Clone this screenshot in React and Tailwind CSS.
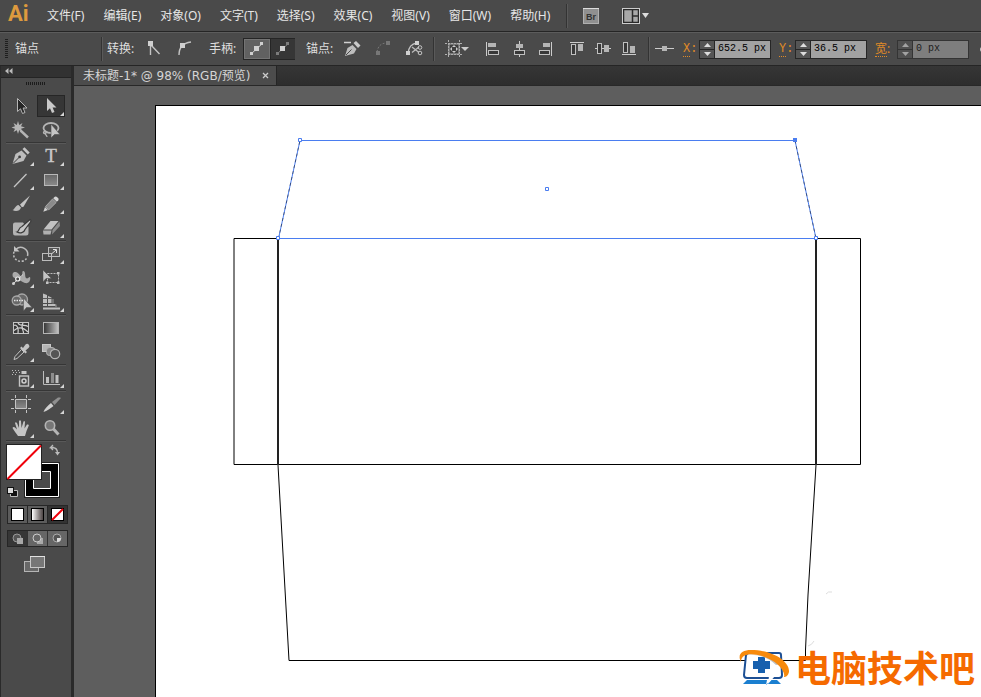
import { useState } from 'react'

const menus = ['文件(F)', '编辑(E)', '对象(O)', '文字(T)', '选择(S)', '效果(C)', '视图(V)', '窗口(W)', '帮助(H)']

const Cursor = ({ x = 0, y = 0, fill = '#c9c9c9', stroke = 'none' }) => (
  <path transform={`translate(${x} ${y})`} d="M0 0V13L3 10.3L5 15L7.5 14L5.6 9.5H9.5Z" fill={fill} stroke={stroke} />
)

// every tool icon is drawn in a 30x24 cell
const toolGroups = [
  [
    { name: '选择工具', icon: <Cursor x={11.5} y={4.5} fill="#262626" stroke="#b5b5b5" /> },
    { name: '直接选择工具', more: true, icon: <Cursor x={11} y={4} /> },
    {
      name: '魔棒工具',
      icon: (
        <>
          <path d="M12 3L13.2 7L16.5 5L15 8.3L19 9.5L15 10.8L16.5 14L13.2 12.2L12 16L10.8 12.2L7.5 14L9 10.8L5.5 9.5L9 8.3L7.5 5L10.8 7Z" fill="#b5b5b5" />
          <path d="M14.5 12.5L22 19.5" stroke="#b5b5b5" strokeWidth="2.4" />
        </>
      ),
    },
    {
      name: '套索工具',
      icon: (
        <>
          <ellipse cx="15" cy="10" rx="7.5" ry="5" fill="none" stroke="#b5b5b5" strokeWidth="1.8" />
          <path d="M9 13C6 14 8 17 10 15C12 14 9 12 9 15C9 17 11 17 11 19" fill="none" stroke="#b5b5b5" strokeWidth="1.2" />
          <path d="M15 6V20L18.5 16.5H24Z" fill="#c4c4c4" stroke="#4a4a4a" strokeWidth="0.6" />
        </>
      ),
    },
  ],
  [
    {
      name: '钢笔工具', more: true,
      icon: (
        <>
          <path d="M6.5 20L9.5 10L15.5 6.5L20.5 11.5L17.5 17Z" fill="#bcbcbc" />
          <path d="M16.5 5L18.5 3.3L23.7 8.5L21.8 10.5Z" fill="#c4c4c4" />
          <path d="M7 19.5L13 13.5" stroke="#3c3c3c" />
          <circle cx="13.6" cy="12.9" r="1.4" fill="#3c3c3c" />
        </>
      ),
    },
    {
      name: '文字工具', more: true,
      icon: <text x="15" y="18" textAnchor="middle" fontSize="19" fontFamily="Liberation Serif, serif" fill="#c9c9c9" stroke="#c9c9c9" strokeWidth="0.4">T</text>,
    },
    { name: '直线段工具', more: true, icon: <path d="M8 19L20.5 6" stroke="#c4c4c4" strokeWidth="1.3" /> },
    { name: '矩形工具', more: true, icon: <rect x="8.5" y="6.5" width="13" height="11" fill="url(#grey)" stroke="#b8b8b8" /> },
    {
      name: '画笔工具',
      icon: (
        <>
          <path d="M14 12.5L24 3.5L17.5 14.8L15.8 15.2Z" fill="#c4c4c4" />
          <path d="M6.5 18C9 17.5 9 13.5 12.5 13L15 15.5C14 19.5 9 19.5 6.5 18Z" fill="#bcbcbc" />
        </>
      ),
    },
    {
      name: '铅笔工具', more: true,
      icon: (
        <>
          <path d="M7.3 19.7L9 15L12 18Z" fill="#d0d0d0" />
          <path d="M9.5 14.5L16.5 7L20.2 10.5L12.8 17.8Z" fill="#8a8a8a" stroke="#b5b5b5" strokeWidth="0.8" />
          <path d="M17.2 6.2L18.8 4.8Q20 4 21.2 5.2L22.3 6.3Q23 7.4 22.2 8.4L20.8 9.8Z" fill="#d5d5d5" />
        </>
      ),
    },
    {
      name: '斑点画笔工具',
      icon: (
        <>
          <path d="M7 8.5Q7 6.5 9 6.5H17L20 10.5H22.500V17Q22.500 19.500 20 19.500H9Q7 19.500 7 17Z" fill="#b4b4b4" />
          <path d="M11 16C13 15.500 12.500 11.500 16 10.500L24 3.500Q25.500 4 24.500 6L19 13.500C18 17 14 17.500 11 16Z" fill="#c6c6c6" stroke="#3a3a3a" strokeWidth="1.200" />
        </>
      ),
    },
    {
      name: '橡皮擦工具', more: true,
      icon: (
        <>
          <path d="M14.500 5H22.500L15.500 13.500H7.500Z" fill="#c2c2c2" />
          <path d="M7 14.500H15.500L14.500 18.500H7.500Z" fill="#b0b0b0" />
          <path d="M16.500 14L23.500 5.500L24 10L16 18.500Z" fill="#8c8c8c" />
        </>
      ),
    },
  ],
  [
    {
      name: '旋转工具', more: true,
      icon: (
        <>
          <path d="M10 7.2A7 7 0 0 1 21.5 14" fill="none" stroke="#bcbcbc" strokeWidth="1.5" />
          <path d="M20.5 16.5A7 7 0 0 1 9 8" fill="none" stroke="#bcbcbc" strokeWidth="1.5" strokeDasharray="2 1.6" />
          <path d="M8 4V9.5H13.5Z" fill="#c4c4c4" />
        </>
      ),
    },
    {
      name: '比例缩放工具', more: true,
      icon: (
        <>
          <rect x="12.500" y="5.500" width="11" height="9" fill="#575757" stroke="#bcbcbc" />
          <rect x="6.500" y="11.500" width="9" height="7" fill="none" stroke="#bcbcbc" />
          <path d="M15.500 12L20 8M17 7.500H20.500V11" fill="none" stroke="#e0e0e0" />
        </>
      ),
    },
    {
      name: '宽度工具', more: true,
      icon: (
        <>
          <path d="M7 11C5.500 7 8 5 11 6.500C14 8 14.500 12 16 10C17 8 15.500 4.500 17.500 5C20 6 18.500 10 20 12C21.500 13.500 22.500 11 24 11C25 14 23 18 19 17C16 16 15 14 12.500 14.500Z" fill="#aaaaaa" />
          <path d="M7 18L17 8.500" stroke="#e0e0e0" />
          <circle cx="11.700" cy="13" r="2" fill="#4a4a4a" stroke="#efefef" strokeWidth="1.200" />
          <circle cx="7.500" cy="17.500" r="1.500" fill="#d0d0d0" />
        </>
      ),
    },
    {
      name: '自由变换工具',
      icon: (
        <>
          <rect x="11.500" y="7.500" width="11" height="9" fill="none" stroke="#bdbdbd" strokeDasharray="2 1" />
          <path d="M21 6h2.500v2.500H21zM10 15.500h2.500v2.500H10zM21 15.500h2.500v2.500H21z" fill="#c4c4c4" />
          <path d="M7 4V16L10 12.500H15.500Z" fill="#c4c4c4" stroke="#4a4a4a" strokeWidth="0.500" />
        </>
      ),
    },
    {
      name: '形状生成器工具', more: true,
      icon: (
        <>
          <circle cx="16" cy="9.500" r="5.500" fill="#686868" stroke="#a8a8a8" strokeWidth="1.300" />
          <circle cx="10.700" cy="10.500" r="4.500" fill="#686868" stroke="#a8a8a8" strokeWidth="1.300" />
          <path d="M8 10.500H18" stroke="#e5e5e5" strokeWidth="1.300" strokeDasharray="1.500 1" />
          <path d="M17.500 8V21L20.500 17.500H26Z" fill="#c6c6c6" stroke="#4a4a4a" strokeWidth="0.500" />
        </>
      ),
    },
    {
      name: '透视网格工具', more: true,
      icon: (
        <>
          <path d="M7 3.500L11 5V13H7ZM12 6L15.500 7.500V13H12ZM7 14H11V16H7ZM12 14H19.500V16H12ZM7 17.500H24V19.500H7Z" fill="#bdbdbd" />
          <path d="M7 8.500H16" stroke="#5a5a5a" />
          <path d="M17 9V13.500M20 14.500V17" stroke="#9a9a9a" />
        </>
      ),
    },
  ],
  [
    {
      name: '网格工具',
      icon: (
        <>
          <rect x="7.500" y="6.500" width="15" height="11" fill="#383838" stroke="#c4c4c4" />
          <path d="M8 9.500C11 8 13 13 12 17.500M12 7C14 11 19 8 22 10.500M8 14.500C13 10 18 12 22 16M17 7C14 12 18 14 17.500 17.500" stroke="#d0d0d0" strokeWidth="1.200" fill="none" />
        </>
      ),
    },
    { name: '渐变工具', icon: <rect x="7.500" y="6.500" width="15" height="11" fill="url(#ramp)" stroke="#b5b5b5" /> },
    {
      name: '吸管工具', more: true,
      icon: (
        <>
          <path d="M8 19.500L9 16.500L15.500 9.500L18 12L11 18.500Z" fill="#474747" stroke="#c4c4c4" />
          <path d="M14 8L15.500 6.500L17 8L19.500 4.500Q21.500 3 23 5Q24.200 6.500 22.500 8L19.500 10.500L21 12L19.500 13.500Z" fill="#c4c4c4" />
        </>
      ),
    },
    {
      name: '混合工具',
      icon: (
        <>
          <rect x="6.500" y="4.500" width="8" height="7" fill="#b5b5b5" stroke="#c9c9c9" />
          <rect x="10.500" y="7.500" width="8.500" height="8" rx="3" fill="#858585" stroke="#b5b5b5" />
          <circle cx="19" cy="14" r="4.700" fill="#555" stroke="#b5b5b5" strokeWidth="1.200" />
        </>
      ),
    },
  ],
  [
    {
      name: '符号喷枪工具', more: true,
      icon: (
        <>
          <path d="M6 4.500H14M7 6.500H15M6 8.500H12" stroke="#bcbcbc" strokeDasharray="1 2" />
          <rect x="15.500" y="5" width="5" height="3" fill="#c4c4c4" />
          <rect x="13.500" y="10" width="9" height="10" fill="#4a4a4a" stroke="#c4c4c4" strokeWidth="1.400" />
          <circle cx="18" cy="15" r="2" fill="none" stroke="#cfcfcf" strokeWidth="1.500" />
        </>
      ),
    },
    {
      name: '柱形图工具', more: true,
      icon: (
        <>
          <path d="M7.500 5V18.500H24" stroke="#bdbdbd" fill="none" />
          <path d="M10 11h3v6h-3zM19.500 9h3v8h-3z" fill="#c0c0c0" />
          <path d="M15 7h3v10h-3z" fill="#8e8e8e" />
        </>
      ),
    },
  ],
  [
    {
      name: '画板工具',
      icon: (
        <>
          <rect x="9.500" y="7.500" width="11" height="9" fill="url(#grey)" />
          <path d="M5 7.500H8M22 7.500H25M5 16.500H8M22 16.500H25M9.500 3V6M20.500 3V6M9.500 18V21M20.500 18V21M9.500 7.500H20.500V16.500H9.500Z" stroke="#c4c4c4" fill="none" />
        </>
      ),
    },
    {
      name: '切片工具', more: true,
      icon: (
        <>
          <path d="M7.500 20C8.500 16.500 12 13.500 15 11L17.500 14C14.500 16 11 19 7.500 20Z" fill="#d0d0d0" />
          <path d="M16 10L22 5.500H24.500V6.500L18.500 13Z" fill="#8f8f8f" />
        </>
      ),
    },
    {
      name: '抓手工具', more: true,
      icon: <path d="M12 20C10 17.500 8.500 15 6.500 12C7 10.500 8.500 11 9.500 12L11 13.500L9 7Q9.500 5.500 11 7L13 12V5Q14 3.500 15 5L15.500 12L17.500 5.500Q18.500 4.500 19 6L18.500 12.500L21 8.500Q23 8 22.800 9.500L20.500 15L19 20Z" fill="#c4c4c4" />,
    },
    {
      name: '缩放工具',
      icon: (
        <>
          <circle cx="14" cy="9.500" r="4.700" fill="#777" stroke="#b5b5b5" strokeWidth="1.600" />
          <path d="M17.500 13L22.500 18.500" stroke="#b5b5b5" strokeWidth="3" />
        </>
      ),
    },
  ],
]

const alignIcons = [
  ['水平左对齐', <><path d="M6.500 4V18" stroke="#ccc" /><path d="M8 5h8v4H8z" fill="#b5b5b5" /><rect x="8.500" y="12.500" width="10" height="4" fill="#383838" stroke="#c0c0c0" /></>],
  ['水平居中对齐', <><path d="M13.500 3V19" stroke="#ccc" /><path d="M10 6h7v4h-7z" fill="#b5b5b5" /><rect x="8.500" y="12.500" width="10" height="4" fill="#383838" stroke="#c0c0c0" /></>],
  ['水平右对齐', <><path d="M19.500 4V18" stroke="#ccc" /><path d="M11 5h7v4h-7z" fill="#b5b5b5" /><rect x="7.500" y="12.500" width="10" height="4" fill="#383838" stroke="#c0c0c0" /></>],
  ['垂直顶对齐', <><path d="M6 4.500H20" stroke="#ccc" /><rect x="7.500" y="6.500" width="4" height="10" fill="#383838" stroke="#c0c0c0" /><path d="M14 6h5v7h-5z" fill="#b5b5b5" /></>],
  ['垂直居中对齐', <><path d="M5 10.500H21" stroke="#ccc" /><rect x="7.500" y="5.500" width="4" height="10" fill="#383838" stroke="#c0c0c0" /><path d="M14 7h5v7h-5z" fill="#b5b5b5" /></>],
  ['垂直底对齐', <><path d="M6 16.500H20" stroke="#ccc" /><rect x="7.500" y="4.500" width="4" height="10" fill="#383838" stroke="#c0c0c0" /><path d="M14 8h5v7h-5z" fill="#b5b5b5" /></>],
]

function Divider({ className = '' }) {
  return <span className={`h-6 w-[2px] shrink-0 border-l border-[#333] border-r border-r-[#5a5a5a] ${className}`} />
}

function IconButton({ label, width, className = '', children }) {
  return (
    <button type="button" aria-label={label} className={`shrink-0 ${className}`}>
      <svg width={width} height="22" viewBox={`0 0 ${width} 22`} fill="none">{children}</svg>
    </button>
  )
}

function HandleIcon({ dim }) {
  const c = dim ? '#7c7c7c' : '#cfcfcf'
  return (
    <svg width="24" height="18" viewBox="0 0 24 18">
      <path d="M6 14L18 3" stroke={c} />
      <path d="M5 12h3v3H5zM15 2h3v3h-3z" fill={c} />
      <path d="M9 6h5v5H9z" fill="#d0d0d0" />
    </svg>
  )
}

function NumberField({ id, label, value, disabled, labelClass }) {
  const [text, setText] = useState(value)
  return (
    <div className="ml-2 flex shrink-0 items-center">
      <div className={labelClass}>
        <label htmlFor={id} className="border-b border-dotted border-[#e08a27] text-[12px] leading-[14px] text-[#e08a27]">{label}</label>
        <span className="text-[12px] leading-[14px] text-[#e08a27]">:</span>
      </div>
      <div className={`flex h-[19px] w-[72px] border border-[#262626] ${disabled ? 'opacity-60' : ''}`}>
        <div className="flex w-[15px] flex-col border-r border-[#262626] bg-[#555]">
          <button type="button" aria-label={`${label} +`} disabled={disabled} className="flex flex-1 items-center justify-center border-b border-[#262626]">
            <svg width="7" height="4"><path d="M0 4L3.500 0L7 4Z" fill="#ddd" /></svg>
          </button>
          <button type="button" aria-label={`${label} -`} disabled={disabled} className="flex flex-1 items-center justify-center">
            <svg width="7" height="4"><path d="M0 0L3.500 4L7 0Z" fill="#ddd" /></svg>
          </button>
        </div>
        <input
          id={id}
          value={text}
          disabled={disabled}
          onChange={(e) => setText(e.target.value)}
          className="w-0 min-w-0 flex-1 bg-[#a2a2a2] px-[3px] font-['Liberation_Mono',monospace] text-[10px] leading-4 text-black outline-none"
        />
      </div>
    </div>
  )
}

function MenuBar() {
  return (
    <header className="flex h-8 shrink-0 items-center border-b border-[#252525] bg-[#4a4a4a]">
      <span className="w-[39px] shrink-0 pb-1 pl-2 font-['Roboto',sans-serif] text-[22px] leading-6 font-bold text-[#dd9a3e]">Ai</span>
      <nav className="flex shrink-0 gap-[3px]">
        {menus.map((m) => (
          <button key={m} type="button" className="px-2 text-[12px] leading-5 whitespace-nowrap text-[#e6e6e6]">{m}</button>
        ))}
      </nav>
      <Divider className="ml-2 h-5" />
      <button type="button" aria-label="Bridge" className="ml-[15px] shrink-0">
        <svg width="16" height="16" viewBox="0 0 16 16">
          <rect x="0.500" y="0.500" width="15" height="15" fill="#909090" stroke="#b0b0b0" />
          <path d="M0 0.500H16" stroke="#ddd" />
          <text x="8" y="12" textAnchor="middle" fontSize="9" fontWeight="bold" fontFamily="Liberation Sans, sans-serif" fill="#333">Br</text>
        </svg>
      </button>
      <button type="button" aria-label="排列文档" className="ml-[23px] shrink-0">
        <svg width="28" height="16" viewBox="0 0 28 16">
          <rect x="0.500" y="0.500" width="17" height="15" fill="#2b2b2b" stroke="#ccc" />
          <path d="M2 2h8v12H2zM11 2h5v5.500h-5zM11 8.500h5V14h-5z" fill="#a8a8a8" stroke="#2b2b2b" strokeWidth="0.500" />
          <path d="M20 5H27L23.500 10Z" fill="#ddd" />
        </svg>
      </button>
    </header>
  )
}

function ControlBar() {
  const label = 'shrink-0 pb-px text-[12px] leading-4 text-[#dedede] whitespace-nowrap'
  return (
    <div className="flex h-[34px] shrink-0 items-center overflow-hidden border-t border-b border-t-[#5c5c5c] border-b-[#252525] bg-[#4a4a4a]">
      <svg className="ml-[5px] shrink-0" width="3" height="20"><path d="M1.500 0V20" stroke="#1f1f1f" strokeWidth="3" strokeDasharray="1 1" /></svg>
      <span className={`${label} ml-[7px] w-[86px]`}>锚点</span>
      <Divider />
      <span className={`${label} ml-1 w-[38px]`}>转换:</span>
      <IconButton label="转换为尖角" width={18}>
        <path d="M5.500 6V17M6 7L14.500 16" stroke="#c4c4c4" strokeWidth="1.400" />
        <path d="M3 3h5v5H3z" fill="#d0d0d0" />
      </IconButton>
      <IconButton label="转换为平滑" width={18} className="ml-3">
        <path d="M4 17C4 9 8 5 16 4" stroke="#c4c4c4" strokeWidth="1.400" />
        <path d="M5 5h5v5H5z" fill="#d0d0d0" />
      </IconButton>
      <span className={`${label} ml-4 w-[34px]`}>手柄:</span>
      <div className="flex h-[22px] w-[52px] shrink-0 border border-[#252525]">
        <button type="button" aria-label="显示手柄" className="flex flex-1 items-center justify-center border border-[#747474] bg-[#616161]"><HandleIcon /></button>
        <button type="button" aria-label="隐藏手柄" className="flex flex-1 items-center justify-center border-l border-[#252525] bg-[#363636]"><HandleIcon dim /></button>
      </div>
      <span className={`${label} ml-[11px] w-9`}>锚点:</span>
      <IconButton label="删除锚点" width={20}>
        <path d="M2 4.500H9" stroke="#d0d0d0" strokeWidth="1.500" />
        <path d="M3 18L5.500 10L10.500 7L14.500 11L12 15.500Z" fill="#bdbdbd" />
        <path d="M11.500 5L14 3L18.500 7.500L16 10Z" fill="#c9c9c9" />
        <path d="M4 17L9.500 11.500" stroke="#4a4a4a" />
      </IconButton>
      <IconButton label="连接端点" width={20} className="ml-[11px]">
        <path d="M4 14C5 8 8 5 14 5" stroke="#777" strokeDasharray="2 1.500" />
        <path d="M3 13h4v4H3zM13 3h4v4h-4z" fill="#777" />
      </IconButton>
      <IconButton label="剪切路径" width={20} className="ml-[11px]">
        <path d="M4 15C5 9 7 6 13 5" stroke="#c4c4c4" strokeWidth="1.300" />
        <path d="M2 13h4v4H2zM11 3h4v4h-4z" fill="#d0d0d0" />
        <path d="M8 9L15 14.500M8 14.500L15 9" stroke="#bbb" strokeWidth="1.300" />
        <circle cx="16" cy="9.500" r="1.800" stroke="#c4c4c4" />
        <circle cx="16" cy="15" r="1.800" stroke="#c4c4c4" />
      </IconButton>
      <Divider className="ml-[9px]" />
      <IconButton label="对齐画板" width={28} className="ml-2">
        <path d="M5.500 2V20M16.500 2V20M2 5.500H20M2 16.500H20" stroke="#b0b0b0" strokeDasharray="2 1" />
        <rect x="6" y="6" width="10" height="10" fill="#3f3f3f" stroke="#aaa" />
        <path d="M11 7L13 9H9ZM11 15L13 13H9ZM7 11L9 9V13ZM15 11L13 9V13Z" fill="#ccc" />
        <path d="M18 9H26L22 13Z" fill="#ccc" />
      </IconButton>
      <div className="ml-[9px] flex shrink-0">
        {alignIcons.slice(0, 3).map(([name, icon]) => <IconButton key={name} label={name} width={26}>{icon}</IconButton>)}
      </div>
      <div className="ml-[6px] flex shrink-0">
        {alignIcons.slice(3).map(([name, icon]) => <IconButton key={name} label={name} width={26}>{icon}</IconButton>)}
      </div>
      <Divider className="ml-[6px]" />
      <IconButton label="参考点" width={22} className="ml-[3px]">
        <path d="M2 10.500H21" stroke="#ccc" />
        <path d="M9 8h5v5H9z" fill="#b5b5b5" />
      </IconButton>
      <NumberField id="pos-x" label="X" value="652.5 px" labelClass="w-4 font-['Liberation_Mono',monospace] flex" />
      <NumberField id="pos-y" label="Y" value="36.5 px" labelClass="w-4 font-['Liberation_Mono',monospace] flex" />
      <NumberField id="size-w" label="宽" value="0 px" disabled labelClass="w-[22px] flex" />
      <span className="ml-[11px] h-[5px] w-[5px] shrink-0 rounded-full bg-[#c4c4c4]" />
    </div>
  )
}

function ToolPanel() {
  const [active, setActive] = useState('直接选择工具')
  return (
    <aside className="flex w-[74px] shrink-0 flex-col border-r-3 border-l border-[#2a2a2a] bg-[#4a4a4a]">
      <div className="flex h-3 shrink-0 items-center border-b border-[#242424] bg-[#323232] pl-1">
        <svg width="8" height="7"><path d="M3.500 0V6L0 3ZM7.500 0V6L4 3Z" fill="#bbb" /></svg>
      </div>
      <div className="flex h-4 shrink-0 items-start justify-center pt-1">
        <svg width="20" height="3"><path d="M0 1.500H20" stroke="#1c1c1c" strokeWidth="3" strokeDasharray="1 1" /></svg>
      </div>
      <div className="px-[5px]">
        {toolGroups.map((group, i) => (
          <div key={i} className="grid grid-cols-2 border-b border-[#595959] pb-px shadow-[inset_0_-1px_0_#363636]">
            {group.map((tool) => (
              <button
                key={tool.name}
                type="button"
                aria-label={tool.name}
                onClick={() => setActive(tool.name)}
                className="flex h-6 justify-center"
              >
                <svg width="30" height="24" viewBox="0 0 30 24">
                  {active === tool.name && <rect x="1.500" y="1.500" width="27" height="21" fill="#363636" stroke="#262626" />}
                  {tool.icon}
                  {tool.more && <path d="M28 18V22H24Z" fill="#d5d5d5" />}
                </svg>
              </button>
            ))}
          </div>
        ))}

        <button type="button" aria-label="填色和描边" className="mt-[2px] block">
          <svg width="60" height="55" viewBox="6 444 60 55">
            <path d="M54 447.500H50.500L53 445M50.500 447.500L53 450M52 447.500Q57.500 447.500 57.500 453" fill="none" stroke="#bbb" strokeWidth="1.300" />
            <path d="M55 452H60L57.500 455.500Z" fill="#bbb" />
            <path d="M24 462H60V498H24Z" fill="#222" />
            <path d="M25.500 463.500H58.500V496.500H25.500Z" fill="#000" stroke="#fff" />
            <path d="M33.500 471.500H50.500V488.500H33.500Z" fill="#4a4a4a" stroke="#fff" />
            <rect x="6.500" y="444.500" width="35" height="35" fill="#fff" stroke="#222" />
            <path d="M7.500 479L41 445.500" stroke="#f0000a" strokeWidth="2" />
            <path d="M10.500 490.500H17.500V496.500H10.500Z" fill="#111" stroke="#bbb" />
            <rect x="7.500" y="487.500" width="6" height="6" fill="#ddd" stroke="#111" />
          </svg>
        </button>

        <div className="mt-[6px] ml-px flex h-[19px] w-[61px] border border-[#262626] bg-[#5c5c5c]">
          <button type="button" aria-label="颜色" className="flex flex-1 items-center justify-center"><span className="h-[13px] w-[13px] border border-black bg-white" /></button>
          <button type="button" aria-label="渐变" className="flex flex-1 items-center justify-center border-x border-[#262626]"><span className="h-[13px] w-[13px] border border-black bg-linear-to-r from-white to-[#4d4545]" /></button>
          <button type="button" aria-label="无" className="flex flex-1 items-center justify-center bg-[#333]">
            <svg width="13" height="13"><rect x="0.500" y="0.500" width="12" height="12" fill="#fff" stroke="#000" /><path d="M1 12L12 1" stroke="#f0000a" strokeWidth="2" /></svg>
          </button>
        </div>

        <div className="mt-[6px] ml-px flex h-[17px] w-[61px] border border-[#262626] bg-[#666]">
          <button type="button" aria-label="正常绘图" className="flex flex-1 items-center justify-center bg-[#363636]">
            <svg width="13" height="13"><circle cx="6" cy="6" r="4" fill="#555" stroke="#999" /><path d="M6 6h6v6H6z" fill="#a8a8a8" /></svg>
          </button>
          <button type="button" aria-label="背面绘图" className="flex flex-1 items-center justify-center border-x border-[#333]">
            <svg width="13" height="13"><path d="M6 6h6v6H6z" fill="#aaa" /><circle cx="6" cy="6" r="4" fill="#666" stroke="#ccc" /></svg>
          </button>
          <button type="button" aria-label="内部绘图" className="flex flex-1 items-center justify-center">
            <svg width="13" height="13"><circle cx="6" cy="6" r="4" fill="#555" stroke="#aaa" /><path d="M6 6H10A4 4 0 0 1 6 10Z" fill="#ddd" /></svg>
          </button>
        </div>

        <button type="button" aria-label="更改屏幕模式" className="mx-auto mt-2 block">
          <svg width="26" height="18" viewBox="0 0 26 18">
            <rect x="1.500" y="6.500" width="14" height="10" fill="#686868" stroke="#b5b5b5" />
            <rect x="7.500" y="1.500" width="14" height="11" fill="#777" stroke="#c9c9c9" />
            <path d="M7 1.500H22" stroke="#e2e2e2" />
          </svg>
        </button>
      </div>
    </aside>
  )
}

// envelope template; coordinates follow the window
function Artwork() {
  return (
    <svg className="block shrink-0" width="825" height="591" viewBox="156 106 825 591" fill="none">
      <path d="M278 238.500H234V464.500H860.500V238.500H816" stroke="#000" />
      <path d="M278 238V465M816 238V465" stroke="#222" strokeWidth="2" />
      <path d="M278 465L289 660.500H805.500V650L808 595L816 465" stroke="#000" />
      <path d="M278.500 238.500L300 140.500H795L816 238.500Z" stroke="#4a7df0" />
      <path d="M278.500 238.500L300 140.500M795 140.500L816 238.500" stroke="#111" strokeDasharray="3 3" strokeOpacity="0.500" />
      <path d="M298.500 138.500h3v3h-3zM276.500 236.500h3v3h-3zM814.500 236.500h3v3h-3zM545.500 187.500h3v3h-3z" fill="#fff" stroke="#4a7df0" />
      <path d="M793 138h4v4h-4z" fill="#4a7df0" />
      <path d="M826 594Q828 591 832 592M808 646Q812 645 814 641" stroke="#ddd" />
    </svg>
  )
}

function Watermark() {
  return (
    <div className="absolute right-[6px] bottom-2 flex items-center">
      <svg width="56" height="40" viewBox="739 649 56 40" fill="none">
        <path d="M748 653H779Q781 653 781 655L782 675Q782 678 779 678H747Q744 678 744 675L746 655Z" fill="#fff" stroke="#1c4f94" strokeWidth="2" />
        <path d="M758 657H765V661H770V669H765V673H758V669H753V661H758Z" fill="#1760ae" />
        <path d="M747 680H767L766 685L771 680H777L781 684H743Z" fill="#1b7fd0" />
        <path d="M769 676L768 684L775 676Z" fill="#fff" />
        <path d="M746 655C757 654 768 657 776 665L781 664L768 654Z" fill="#c0c0c0" />
        <path d="M741 662C737 654 742 650 751 650C772 650 790 661 789 672C788 676 786 677 784 677C786 671 776 660 762 656C752 653 741 653 741 662Z" fill="#f78a0c" />
      </svg>
      <span className="text-[36px] leading-10 font-bold whitespace-nowrap text-[#f56a00]">电脑技术吧</span>
    </div>
  )
}

export default function App() {
  return (
    <div className="flex min-h-screen flex-col overflow-hidden bg-[#5e5e5e] font-['Noto_Sans','Noto_Sans_CJK_SC',sans-serif]">
      <svg width="0" height="0" className="absolute">
        <defs>
          <linearGradient id="grey" x1="0" y1="0" x2="0" y2="1"><stop offset="0" stopColor="#666" /><stop offset="1" stopColor="#8a8a8a" /></linearGradient>
          <linearGradient id="ramp"><stop offset="0" stopColor="#333" /><stop offset="1" stopColor="#c4c4c4" /></linearGradient>
        </defs>
      </svg>
      <MenuBar />
      <ControlBar />
      <div className="flex flex-1">
        <ToolPanel />
        <main className="relative flex min-w-0 flex-1 flex-col">
          <div className="flex h-5 shrink-0 border-b border-[#282828] bg-linear-to-b from-[#363636] to-[#2d2d2d]">
            <div className="flex items-center border-r border-[#252525] bg-[#4c4c4c] pr-[5px] pl-[9px]">
              <span className="font-['DejaVu_Sans','Noto_Sans_CJK_SC',sans-serif] text-[12px] leading-4 whitespace-nowrap text-[#d5d5d5]">未标题-1* @ 98% (RGB/预览)</span>
              <button type="button" aria-label="关闭" className="ml-[9px] flex h-4 w-3 items-center justify-center">
                <svg width="7" height="7"><path d="M1 1L6 6M6 1L1 6" stroke="#ccc" strokeWidth="1.300" /></svg>
              </button>
            </div>
          </div>
          <div className="flex flex-1 pt-[19px] pl-[81px]">
            <div className="min-w-0 flex-1 overflow-hidden border-t border-l border-black bg-white">
              <Artwork />
            </div>
          </div>
          <Watermark />
        </main>
      </div>
    </div>
  )
}
